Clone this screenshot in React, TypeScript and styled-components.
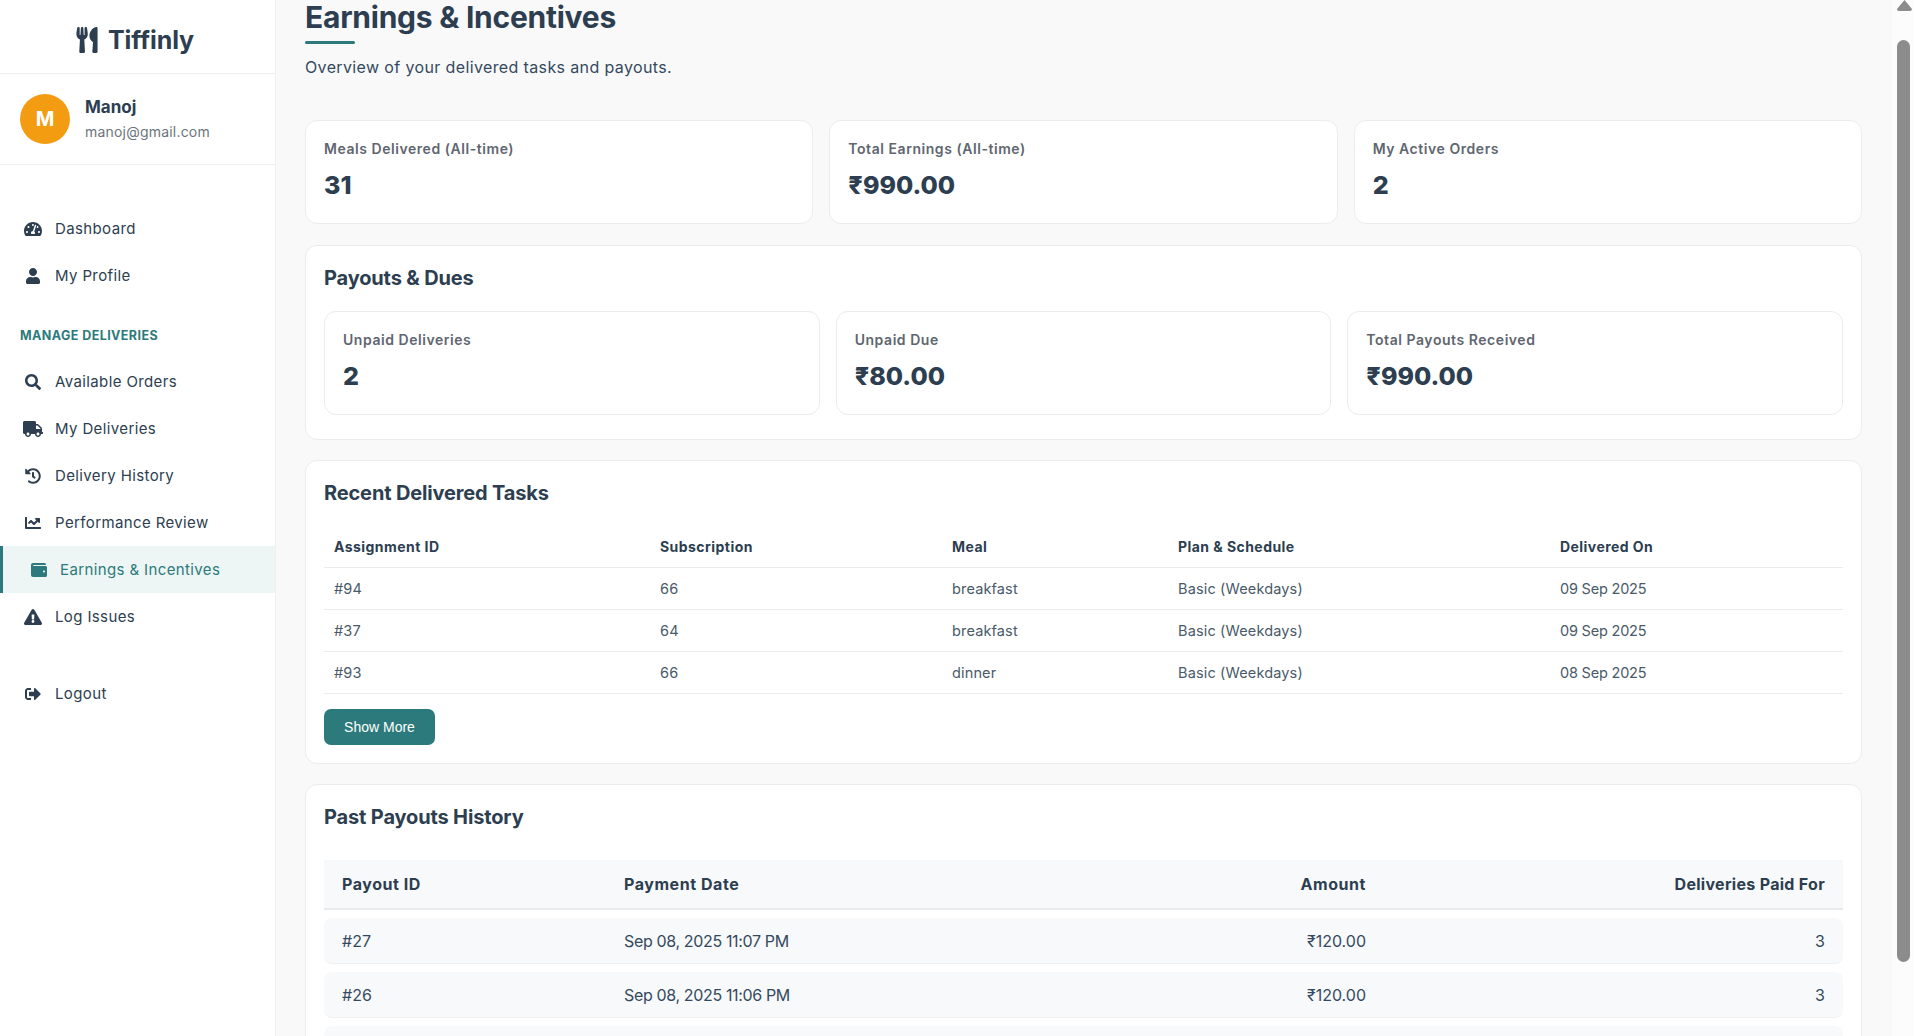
import React from 'react';
import styled, { createGlobalStyle } from 'styled-components';
import {
  FaChartLine,
  FaExclamationTriangle,
  FaHistory,
  FaSearch,
  FaSignOutAlt,
  FaTachometerAlt,
  FaTruck,
  FaUser,
  FaUtensils,
  FaWallet,
} from 'react-icons/fa';

const GlobalStyle = createGlobalStyle`
  html, body { margin: 0; padding: 0; height: 100%; overflow: hidden; }
  body { font-family: Inter, "Noto Sans", sans-serif; color: #2c3e50; background: #f9f9f9; }
  * { box-sizing: border-box; }
`;

const Layout = styled.div`
  display: flex;
  width: 1914px;
  height: 1036px;
  overflow: hidden;
`;

const Sidebar = styled.aside`
  flex: 0 0 276px;
  background: #fff;
  border-right: 1px solid #eef0f2;
`;

const Logo = styled.div`
  height: 74px;
  padding: 7px 7px 0 0;
  border-bottom: 1px solid #eeeeee;
  display: flex;
  align-items: center;
  justify-content: center;
  gap: 8px;
  font-size: 25px;
  font-weight: 700;
  letter-spacing: -0.1px;
  svg { font-size: 26px; }
`;

const Profile = styled.div`
  height: 91px;
  padding: 0 20px;
  border-bottom: 1px solid #eeeeee;
  display: flex;
  align-items: center;
  gap: 15px;
`;

const Avatar = styled.div`
  width: 50px;
  height: 50px;
  border-radius: 50%;
  background: #f39c12;
  color: #fff;
  display: flex;
  align-items: center;
  justify-content: center;
  font-size: 20px;
  font-weight: 700;
`;

const UserName = styled.div`
  font-size: 17px;
  font-weight: 700;
  line-height: 24px;
  padding-top: 1px;
`;

const UserMail = styled.div`
  font-size: 14px;
  letter-spacing: 0.2px;
  color: #6c757d;
  line-height: 24px;
  margin-top: 1px;
`;

const Nav = styled.nav`
  padding-top: 40px;
`;

const NavItem = styled.div<{ $active?: boolean }>`
  height: 47px;
  display: flex;
  align-items: center;
  gap: ${({ $active }) => ($active ? '11px' : '12px')};
  padding-left: ${({ $active }) => ($active ? '26px' : '23px')};
  font-size: 15px;
  letter-spacing: 0.38px;
  color: ${({ $active }) => ($active ? '#2c7a7b' : '#2c3e50')};
  background: ${({ $active }) => ($active ? '#edf5f5' : 'transparent')};
  border-left: ${({ $active }) => ($active ? '3px solid #2c7a7b' : '0')};
  svg { width: 20px; height: 16px; flex: none; }
`;

const NavLabel = styled.div`
  margin: 20px 0 0;
  height: 39px;
  padding: 9px 0 0 20px;
  font-size: 12.5px;
  font-weight: 700;
  letter-spacing: 0.42px;
  color: #2c7a7b;
`;

const LogoutGap = styled.div`
  height: 30px;
`;

const Main = styled.main`
  flex: 1;
  min-width: 0;
  padding: 0 30px 0 29px;
  overflow: hidden;
`;

const Title = styled.h1`
  margin: 0;
  height: 36px;
  line-height: 34px;
  font-size: 30px;
  font-weight: 700;
  letter-spacing: -0.25px;
`;

const TitleRule = styled.div`
  width: 50px;
  height: 3px;
  margin-top: 5px;
  background: #2c7a7b;
  border-radius: 2px;
`;

const Subtitle = styled.p`
  margin: 11px 0 0;
  font-size: 16px;
  letter-spacing: 0.37px;
  line-height: 24px;
  color: #34495e;
  height: 65px;
`;

const StatGrid = styled.div`
  display: grid;
  grid-template-columns: repeat(3, 1fr);
  gap: 16px;
`;

const TopStats = styled(StatGrid)`
  margin-bottom: 21px;
`;

const StatCard = styled.div`
  height: 104px;
  padding: 18px 18px 0;
  background: #fff;
  border: 1px solid #eaecee;
  border-radius: 12px;
`;

const StatLabel = styled.div`
  font-size: 14px;
  font-weight: 600;
  letter-spacing: 0.55px;
  line-height: 20px;
  color: #5f6670;
`;

const StatValue = styled.div`
  margin-top: 6px;
  font-size: 25px;
  font-weight: 800;
  line-height: 40px;
`;

const Section = styled.section<{ $height?: number }>`
  margin-top: 20px;
  padding: 0 18px;
  background: #fff;
  border: 1px solid #eaecee;
  border-radius: 12px;
  ${({ $height }) => ($height ? `height: ${$height}px;` : '')}
`;

const SectionTitle = styled.h2<{ $height?: number }>`
  margin: 0;
  padding-top: 19px;
  height: ${({ $height }) => $height ?? 65}px;
  font-size: 20px;
  font-weight: 700;
  letter-spacing: -0.15px;
  line-height: 26px;
`;

const TaskTable = styled.table`
  width: 100%;
  border-collapse: collapse;
  table-layout: fixed;
  font-size: 14.5px;

  th {
    height: 41px;
    padding: 0 10px;
    text-align: left;
    font-weight: 700;
    font-size: 14px;
    letter-spacing: 0.45px;
    border-bottom: 1px solid #e9ecef;
  }
  td {
    height: 42px;
    padding: 0 10px;
    letter-spacing: 0.15px;
    color: #495a69;
    border-bottom: 1px solid #e9ecef;
  }
  td:last-child {
    letter-spacing: -0.2px;
  }
`;

const ShowMore = styled.button`
  display: block;
  margin-top: 15px;
  width: 111px;
  height: 36px;
  border: 0;
  border-radius: 7px;
  background: #2c7a7b;
  color: #fff;
  font-family: "Liberation Sans", Arial, sans-serif;
  font-size: 14px;
`;

const PayoutHead = styled.div`
  display: grid;
  grid-template-columns: 282px 400px 1fr 459px;
  align-items: center;
  height: 50px;
  padding: 0 18px 1px;
  background: #f8f9fa;
  border-bottom: 2px solid #e9ecef;
  font-size: 16px;
  font-weight: 700;
  letter-spacing: 0.55px;

  > div:last-child {
    letter-spacing: 0.3px;
  }
`;

const PayoutRow = styled.div`
  display: grid;
  grid-template-columns: 282px 400px 1fr 459px;
  align-items: center;
  height: 46px;
  margin-top: 8px;
  padding: 0 18px;
  background: #f8f9fa;
  border-bottom: 1px solid #f0f1f3;
  border-radius: 8px;
  font-size: 16px;
  color: #34495e;
`;

const PayoutDate = styled.div`
  letter-spacing: -0.35px;
`;

const RightCell = styled.div`
  text-align: right;
`;

const ScrollTrack = styled.div`
  flex: 0 0 22px;
  background: #fcfcfc;
  padding-left: 5px;
`;

const ScrollArrow = styled.svg`
  display: block;
  width: 15px;
  height: 11px;
`;

const ScrollThumb = styled.div`
  width: 13px;
  height: 922px;
  margin-top: 29px;
  background: #8c8c8c;
  border-radius: 7px;
`;

const topStats = [
  { label: 'Meals Delivered (All-time)', value: '31' },
  { label: 'Total Earnings (All-time)', value: '₹990.00' },
  { label: 'My Active Orders', value: '2' },
];

const dueStats = [
  { label: 'Unpaid Deliveries', value: '2' },
  { label: 'Unpaid Due', value: '₹80.00' },
  { label: 'Total Payouts Received', value: '₹990.00' },
];

const tasks = [
  ['#94', '66', 'breakfast', 'Basic (Weekdays)', '09 Sep 2025'],
  ['#37', '64', 'breakfast', 'Basic (Weekdays)', '09 Sep 2025'],
  ['#93', '66', 'dinner', 'Basic (Weekdays)', '08 Sep 2025'],
];

const payouts = [
  ['#27', 'Sep 08, 2025 11:07 PM', '₹120.00', '3'],
  ['#26', 'Sep 08, 2025 11:06 PM', '₹120.00', '3'],
  ['', '', '', ''],
];

const App = () => {
  return (
    <Layout>
      <GlobalStyle />
      <Sidebar>
        <Logo>
          <FaUtensils />
          Tiffinly
        </Logo>
        <Profile>
          <Avatar>M</Avatar>
          <div>
            <UserName>Manoj</UserName>
            <UserMail>manoj@gmail.com</UserMail>
          </div>
        </Profile>
        <Nav>
          <NavItem><FaTachometerAlt />Dashboard</NavItem>
          <NavItem><FaUser />My Profile</NavItem>
          <NavLabel>MANAGE DELIVERIES</NavLabel>
          <NavItem><FaSearch />Available Orders</NavItem>
          <NavItem><FaTruck />My Deliveries</NavItem>
          <NavItem><FaHistory />Delivery History</NavItem>
          <NavItem><FaChartLine />Performance Review</NavItem>
          <NavItem $active><FaWallet />Earnings &amp; Incentives</NavItem>
          <NavItem><FaExclamationTriangle />Log Issues</NavItem>
          <LogoutGap />
          <NavItem><FaSignOutAlt />Logout</NavItem>
        </Nav>
      </Sidebar>

      <Main>
        <Title>Earnings &amp; Incentives</Title>
        <TitleRule />
        <Subtitle>Overview of your delivered tasks and payouts.</Subtitle>

        <TopStats>
          {topStats.map((s) => (
            <StatCard key={s.label}>
              <StatLabel>{s.label}</StatLabel>
              <StatValue>{s.value}</StatValue>
            </StatCard>
          ))}
        </TopStats>

        <Section $height={195}>
          <SectionTitle>Payouts &amp; Dues</SectionTitle>
          <StatGrid>
            {dueStats.map((s) => (
              <StatCard key={s.label}>
                <StatLabel>{s.label}</StatLabel>
                <StatValue>{s.value}</StatValue>
              </StatCard>
            ))}
          </StatGrid>
        </Section>

        <Section $height={304}>
          <SectionTitle>Recent Delivered Tasks</SectionTitle>
          <TaskTable>
            <colgroup>
              <col style={{ width: 326 }} />
              <col style={{ width: 292 }} />
              <col style={{ width: 226 }} />
              <col style={{ width: 382 }} />
              <col />
            </colgroup>
            <thead>
              <tr>
                <th>Assignment ID</th>
                <th>Subscription</th>
                <th>Meal</th>
                <th>Plan &amp; Schedule</th>
                <th>Delivered On</th>
              </tr>
            </thead>
            <tbody>
              {tasks.map((t) => (
                <tr key={t[0]}>
                  {t.map((c, i) => <td key={i}>{c}</td>)}
                </tr>
              ))}
            </tbody>
          </TaskTable>
          <ShowMore>Show More</ShowMore>
        </Section>

        <Section>
          <SectionTitle $height={75}>Past Payouts History</SectionTitle>
          <PayoutHead>
            <div>Payout ID</div>
            <div>Payment Date</div>
            <RightCell>Amount</RightCell>
            <RightCell>Deliveries Paid For</RightCell>
          </PayoutHead>
          {payouts.map((p, i) => (
            <PayoutRow key={i}>
              <div>{p[0]}</div>
              <PayoutDate>{p[1]}</PayoutDate>
              <RightCell>{p[2]}</RightCell>
              <RightCell>{p[3]}</RightCell>
            </PayoutRow>
          ))}
        </Section>
      </Main>

      <ScrollTrack>
        <ScrollArrow viewBox="0 0 15 11">
          <path d="M7.5 0 L15 9 Q15 11 13 11 L2 11 Q0 11 0 9 Z" fill="#8c8c8c" />
        </ScrollArrow>
        <ScrollThumb />
      </ScrollTrack>
    </Layout>
  );
};

export default App;
